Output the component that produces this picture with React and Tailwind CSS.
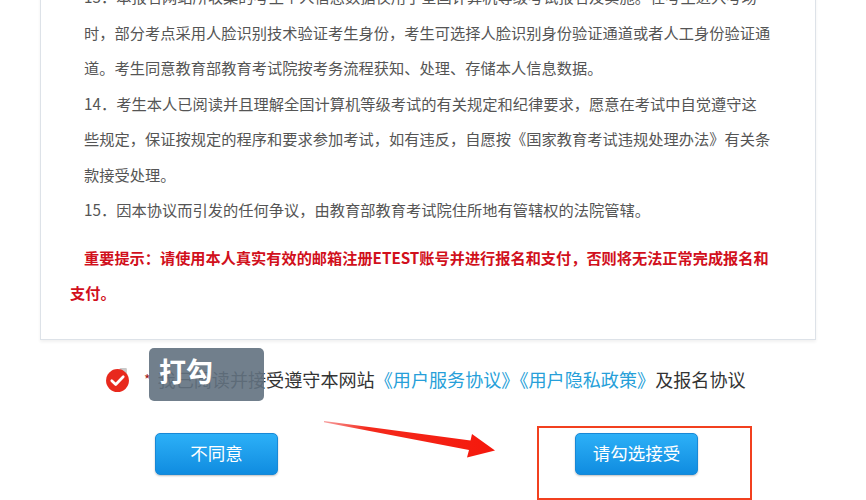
import React from "react";

const cjk = { fontFamily: '"Noto Sans CJK SC", "Noto Sans", sans-serif' };

const lines = [
  "13．本报名网站所收集的考生个人信息数据仅用于全国计算机等级考试报名及实施。在考生进入考场",
  "时，部分考点采用人脸识别技术验证考生身份，考生可选择人脸识别身份验证通道或者人工身份验证通",
  "道。考生同意教育部教育考试院按考务流程获知、处理、存储本人信息数据。",
  "14．考生本人已阅读并且理解全国计算机等级考试的有关规定和纪律要求，愿意在考试中自觉遵守这",
  "些规定，保证按规定的程序和要求参加考试，如有违反，自愿按《国家教育考试违规处理办法》有关条",
  "款接受处理。",
  "15．因本协议而引发的任何争议，由教育部教育考试院住所地有管辖权的法院管辖。",
];

function CheckIcon() {
  return (
    <svg width="25" height="25" viewBox="0 0 24 24">
      <rect x="14" y="1" width="7" height="7" rx="1" fill="#c9c9c9" />
      <circle cx="12" cy="13" r="11" fill="#e8291d" />
      <path d="M6.5 13.2 L10.3 16.8 L17.5 9.4" stroke="#fff" strokeWidth="2.6" fill="none" strokeLinecap="round" strokeLinejoin="round" />
    </svg>
  );
}

function BlueButton({ children }) {
  return (
    <div className="flex h-[42px] w-[123px] items-center justify-center rounded-[5px] border border-[#1888d6] bg-gradient-to-b from-[#2cb0f7] to-[#0f8ce0] text-[17.5px] text-white shadow-[0_1px_2px_rgba(0,0,0,0.25)]">
      {children}
    </div>
  );
}

export default function App() {
  return (
    <div className="relative h-[500px] w-[866px] overflow-hidden bg-white" style={cjk}>
      {/* agreement panel */}
      <div className="ml-[40px] mt-[-22px] w-[776px] border border-[#dde2e8] bg-white pb-[28px] shadow-[0_2px_3px_rgba(0,0,0,0.06)]">
        <div className="pl-[43px] text-[15.25px] leading-[35.5px] text-[#555]">
          {lines.map((l, i) => (
            <div key={i} className="whitespace-nowrap">{l}</div>
          ))}
        </div>
        <div className="mt-[12px] pl-[29px] text-[15.2px] font-bold leading-[35.5px] text-[#d1101c]">
          <div className="whitespace-nowrap pl-[14px]">重要提示：请使用本人真实有效的邮箱注册ETEST账号并进行报名和支付，否则将无法正常完成报名和</div>
          <div>支付。</div>
        </div>
      </div>

      {/* checkbox row */}
      <div className="relative mt-[20px] flex h-[40px] items-center pl-[105px]">
        <CheckIcon />
        <span className="ml-[14px] text-[14px] text-[#a01a1a]">*</span>
        <span className="ml-[7px] whitespace-nowrap text-[18.1px] text-[#333]">
          我已阅读并接受遵守本网站
          <span className="text-[#279fd9]">《用户服务协议》《用户隐私政策》</span>
          及报名协议
        </span>
        <div className="absolute left-[149px] top-[-12px] h-[53px] w-[115px] rounded-[5px] bg-[#62717f]/90 pl-[10px] pt-[4px] text-[27px] font-bold leading-[38px] text-white">
          打勾
        </div>
      </div>

      {/* buttons */}
      <div className="mt-[26px] flex items-start pl-[155px]">
        <div className="mt-[7px]">
          <BlueButton>不同意</BlueButton>
        </div>
        <div className="ml-[259px] h-[74px] w-[215px] border-2 border-[#f2401f] pl-[36px] pt-[5px]">
          <BlueButton>请勾选接受</BlueButton>
        </div>
      </div>

      {/* annotation arrow */}
      <svg className="absolute left-[320px] top-[410px]" width="185" height="55" viewBox="0 0 185 55">
        <defs>
          <linearGradient id="ag" x1="0" y1="0" x2="1" y2="0">
            <stop offset="0" stopColor="#f7a0a0" />
            <stop offset="0.25" stopColor="#f42a1c" />
            <stop offset="1" stopColor="#f5180c" />
          </linearGradient>
        </defs>
        <path d="M4 11 L150.5 30.5 L152 24 L175 40.5 L147 47.5 L149 40 L4 12.2 Z" fill="url(#ag)" />
      </svg>
    </div>
  );
}
